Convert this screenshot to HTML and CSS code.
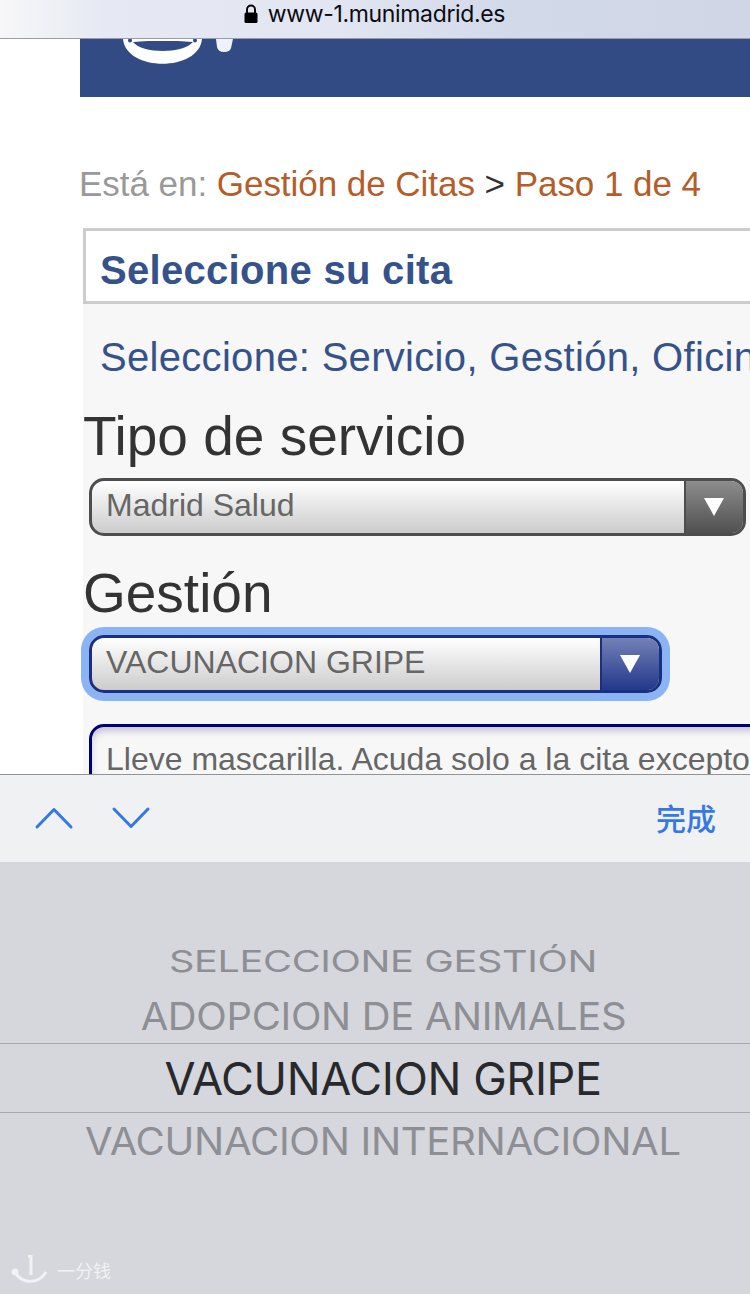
FILE: index.html
```html
<!DOCTYPE html>
<html lang="es">
<head>
    <meta charset="UTF-8">
    <meta name="viewport" content="width=device-width, initial-scale=1.0">
    <title>Gestión de Citas</title>
    <link rel="stylesheet" href="styles.css">
</head>
<body>
    <div class="screen">
        <div class="address-bar">
            <svg class="lock" width="14" height="20" viewBox="0 0 14 20">
                <path d="M3 9V5.5a4 4 0 0 1 8 0V9" fill="none" stroke="#000" stroke-width="1.9"/>
                <rect x="0.5" y="8.5" width="13" height="10.5" rx="1.5"/>
            </svg>
            <span class="url">www-1.munimadrid.es</span>
        </div>

        <main class="page">
            <header class="banner">
                <svg class="banner-logo" width="120" height="30" viewBox="0 0 120 30">
                    <path d="M3 0H82C79 33 6 33 3 0Z" fill="#fff"/>
                    <path d="M13 3Q42 0 73 3C63 15 22 15 13 3Z" fill="#324b85"/>
                    <path d="M27 0.5H60" stroke="#fff" stroke-width="3"/>
                    <circle cx="10" cy="1.5" r="2" fill="#324b85"/>
                    <circle cx="75" cy="1.5" r="2" fill="#324b85"/>
                    <path d="M96 0H113L111 9Q110 13 104 13Q98 13 97 8Z" fill="#eef3fb"/>
                </svg>
            </header>

            <nav class="breadcrumb">
                Está en: <a>Gestión de Citas</a> <span class="sep">&gt;</span> <a>Paso 1 de 4</a>
            </nav>

            <section class="panel">
                <h1 class="panel-title">Seleccione su cita</h1>
                <p class="intro">Seleccione: Servicio, Gestión, Oficin</p>

                <h2 class="label label-service">Tipo de servicio</h2>
                <div class="select">
                    <span class="select-value">Madrid Salud</span>
                    <span class="select-arrow"><svg width="20" height="18" viewBox="0 0 20 18"><path d="M0 0H20L10 18Z" fill="#fff"/></svg></span>
                </div>

                <h2 class="label label-gestion">Gestión</h2>
                <div class="select focused">
                    <span class="select-value">VACUNACION GRIPE</span>
                    <span class="select-arrow"><svg width="20" height="18" viewBox="0 0 20 18"><path d="M0 0H20L10 18Z" fill="#fff"/></svg></span>
                </div>

                <div class="notice">Lleve mascarilla. Acuda solo a la cita excepto</div>
            </section>
        </main>

        <div class="toolbar">
            <svg class="arrow-up" width="40" height="24" viewBox="0 0 40 24"><path d="M3 21L20 3.5L37 21"/></svg>
            <svg class="arrow-down" width="40" height="24" viewBox="0 0 40 24"><path d="M3 3L20 20.5L37 3"/></svg>
            <span class="done">完成</span>
        </div>

        <div class="picker">
            <div class="option far"><span>SELECCIONE GESTIÓN</span></div>
            <div class="option near"><span>ADOPCION DE ANIMALES</span></div>
            <div class="option selected"><span>VACUNACION GRIPE</span></div>
            <div class="option below"><span>VACUNACION INTERNACIONAL</span></div>
            <div class="watermark">
                <svg width="38" height="32" viewBox="0 0 38 32">
                    <path d="M17 2.5H20V21" fill="none" stroke="#f1f2f4" stroke-width="3"/>
                    <path d="M4 18C11 31 28 30 35 18" fill="none" stroke="#f1f2f4" stroke-width="3"/>
                    <circle cx="4" cy="18" r="3.5" fill="#f1f2f4"/>
                </svg>
                <span>一分钱</span>
            </div>
        </div>
    </div>
</body>
</html>
```

FILE: styles.css
```css
* {
    margin: 0;
    padding: 0;
    box-sizing: border-box;
}

body {
    background: #fff;
    font-family: "Liberation Sans", Arial, sans-serif;
}

.screen {
    width: 750px;
    height: 1294px;
    display: flex;
    flex-direction: column;
    overflow: hidden;
}

/* browser bar */
.address-bar {
    height: 39px;
    flex: none;
    display: flex;
    justify-content: center;
    align-items: flex-start;
    gap: 10px;
    padding: 4px 1px 0 0;
    background: linear-gradient(90deg, #f7f7f8 0%, #e6e9f3 14%, #e2e6f2 45%, #d2d9e9 68%, #d0d6e5 100%);
    border-bottom: 1px solid #999ca5;
}

.url {
    font-family: Inter, sans-serif;
    font-size: 23px;
    letter-spacing: -0.35px;
    line-height: 20px;
    color: #0b0c10;
}

/* web page */
.page {
    height: 735px;
    flex: none;
    overflow: hidden;
    padding-left: 80px;
    white-space: nowrap;
}

.banner {
    height: 58px;
    background: #324b85;
    padding-left: 40px;
}

.banner-logo {
    display: block;
}

.breadcrumb {
    margin: 62px 0 0 -1px;
    height: 50px;
    line-height: 50px;
    font-size: 35px;
    letter-spacing: -0.04px;
    color: #999;
}

.breadcrumb a {
    color: #b35e2a;
}

.breadcrumb .sep {
    color: #333;
}

.panel {
    margin: 19px 0 0 3px;
    height: 560px;
    background: #f7f7f7;
}

.panel-title {
    height: 76px;
    width: 800px;
    border: 3px solid #ccc;
    background: #fff;
    padding-left: 14px;
    font-size: 40px;
    letter-spacing: 0.3px;
    line-height: 78px;
    color: #36528b;
}

.intro {
    height: 80px;
    padding-left: 17px;
    font-size: 40px;
    letter-spacing: 0.31px;
    line-height: 106px;
    color: #36528b;
}

.label {
    font-size: 55px;
    font-weight: normal;
    color: #333;
}

.label-service {
    height: 94px;
    line-height: 105px;
}

.label-gestion {
    height: 99px;
    line-height: 114px;
}

.select {
    display: flex;
    width: 657px;
    height: 58px;
    margin-left: 6px;
    border: 3px solid #4d4d4d;
    border-radius: 15px;
    background: linear-gradient(#fff, #ccc);
    overflow: hidden;
}

.select-value {
    flex: 1;
    padding-left: 14px;
    font-size: 32px;
    line-height: 48px;
    color: #666;
}

.select-arrow {
    width: 59px;
    padding-right: 2px;
    border-left: 2px solid #4d4d4d;
    background: linear-gradient(#8d8d8d, #505050);
    display: flex;
    align-items: center;
    justify-content: center;
}

.select.focused {
    width: 573px;
    border-color: #1b2f80;
    box-shadow: 0 0 0 8px #8ab4f3;
}

.focused .select-arrow {
    border-color: #1b2f80;
    background: linear-gradient(#7481b7, #22388a);
}

.notice {
    width: 800px;
    height: 90px;
    margin: 31px 0 0 6px;
    padding-left: 14px;
    border: 3px solid #000075;
    border-radius: 15px;
    box-shadow: inset 0 5px 8px -2px #bcb6cc;
    font-size: 32px;
    line-height: 64px;
    color: #666;
}

/* keyboard toolbar */
.toolbar {
    height: 88px;
    flex: none;
    display: flex;
    align-items: center;
    padding: 0 34px 2px;
    background: #f0f1f2;
    border-top: 1px solid #939395;
}

.toolbar path {
    fill: none;
    stroke: #3578e5;
    stroke-width: 3;
    stroke-linecap: round;
    stroke-linejoin: round;
}

.arrow-down {
    margin-left: 37px;
}

.done {
    margin-left: auto;
    padding-bottom: 2px;
    font-family: "Noto Sans CJK SC", sans-serif;
    font-size: 30px;
    font-weight: 500;
    line-height: 42px;
    color: #3578e5;
}

/* select wheel */
.picker {
    flex: 1;
    padding-top: 73px;
    background: #d5d7dc;
    font-family: Inter, sans-serif;
}

.option {
    padding-left: 16px;
    text-align: center;
    font-size: 45px;
    letter-spacing: -0.4px;
    color: #8e8f94;
    white-space: nowrap;
}

.option span {
    display: inline-block;
}

.far {
    height: 53px;
    line-height: 53px;
}

.far span {
    transform: scale(0.881, 0.66);
}

.near {
    height: 55px;
    line-height: 55px;
}

.near span {
    transform: scale(0.888, 0.85);
}

.selected {
    height: 70px;
    line-height: 70px;
    border-top: 1px solid #a6a8ad;
    border-bottom: 1px solid #a6a8ad;
    color: #28292c;
}

.below {
    height: 56px;
    line-height: 56px;
}

.below span {
    transform: scale(0.892, 0.85);
}

.watermark {
    display: flex;
    align-items: center;
    gap: 8px;
    margin: 84px 0 0 11px;
    font-family: "Noto Sans CJK SC", sans-serif;
    font-size: 18px;
    line-height: 34px;
    color: #f1f2f4;
}
```
